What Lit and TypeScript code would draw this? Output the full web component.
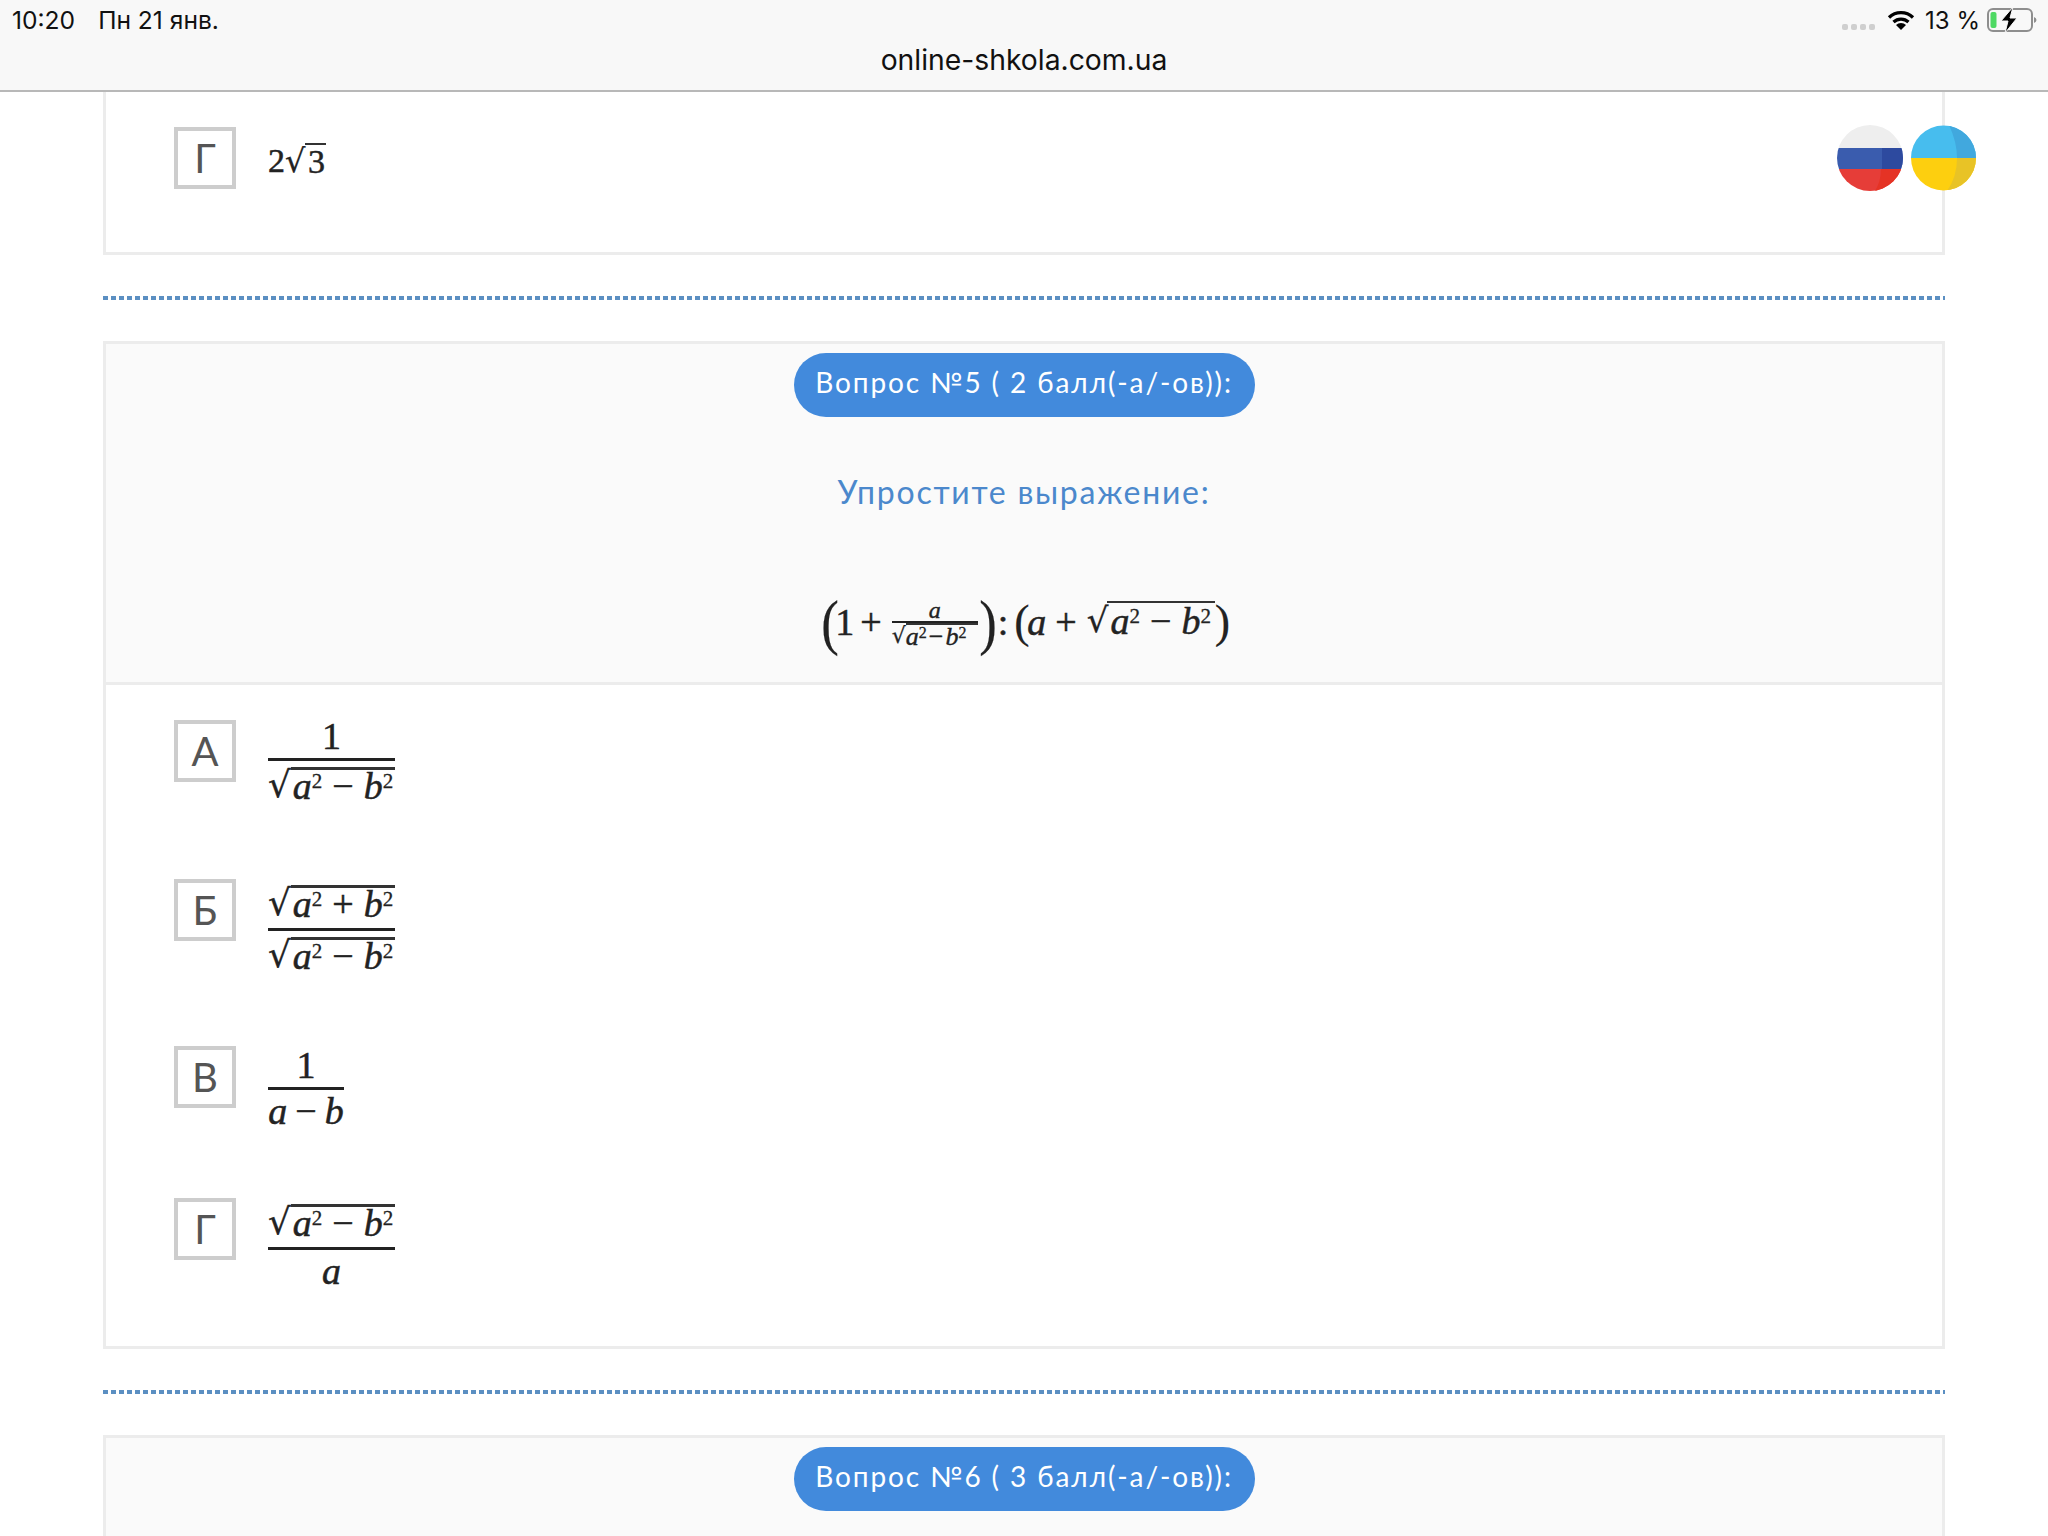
import { LitElement, html, css, svg } from "lit";
import { customElement } from "lit/decorators.js";

@customElement("app-root")
export class AppRoot extends LitElement {
  static styles = css`
    :host { display: block; height: 1536px; overflow: hidden; background: #fff; font-family: "Lato", "Open Sans", sans-serif; position: relative; }
    .status { height: 90px; background: #f8f8f8; border-bottom: 2px solid #b8b8b8; display: flex; flex-direction: column; font-family: "Inter", "Roboto", sans-serif; color: #111; }
    .status-top { height: 40px; display: flex; align-items: center; padding: 0 11px 0 12px; font-size: 24.6px; }
    .date { margin-left: 23px; }
    .spacer { flex: 1; }
    .dots { display: flex; gap: 3px; margin-right: 12px; margin-top: 13px; }
    .dots span { width: 6px; height: 6px; border-radius: 2px; background: #cfcfcf; }
    .pct { margin: 0 7px 0 10px; font-size: 24px; }
    .url { text-align: center; font-size: 28.3px; line-height: 40px; }
    main { padding: 0 103px; display: flex; flex-direction: column; }
    .card { border: 3px solid #ececec; background: #fff; }
    .card.first { border-top: 0; }
    .sep { height: 4px; margin: 41px 0; background: repeating-linear-gradient(90deg, #5b8fc2 0 5px, transparent 5px 8px); }
    .qhead { background: #fafafa; border-bottom: 3px solid #ececec; height: 341px; display: flex; flex-direction: column; align-items: center; padding-top: 9px; box-sizing: border-box; }
    .pill { width: 461px; height: 64px; padding-bottom: 6px; box-sizing: border-box; border-radius: 32px; background: #428adc; color: #fff; font-size: 28px; letter-spacing: 1.9px; display: flex; align-items: center; justify-content: center; white-space: nowrap; }
    .q { color: #4b88cc; font-size: 32px; letter-spacing: 1.75px; margin-top: 55px; line-height: 40px; white-space: nowrap; }
    .answers { padding: 35px 0 59px 68px; display: flex; flex-direction: column; gap: 80px; }
    .answers.one { padding: 35px 0 63px 68px; }
    .row { display: flex; gap: 32px; align-items: flex-start; }
    .box { width: 62px; height: 62px; box-sizing: border-box; border: 4px solid #cdcdcd; color: #555; font-size: 40px; font-weight: 400; display: flex; align-items: center; justify-content: center; flex: none; }
    .math { font-family: "Liberation Serif", "DejaVu Serif", serif; color: #222; font-size: 38px; line-height: 36px; -webkit-text-stroke: 0.5px #222; }
    .math i { font-style: italic; }
    .plain { margin-top: 16px; display: flex; align-items: flex-start; font-size: 34px; }
    .plain .rg { width: 20px; font-size: 32px; }
    .three { border-top: 2px solid #333; line-height: 33px; padding: 0 1px 0 3px; }
    .frac { display: flex; flex-direction: column; align-items: stretch; flex: none; }
    .w127 { width: 127px; }
    .w76 { width: 76px; }
    .w76 .op { margin: 0 8px; }
    .num, .den { display: flex; justify-content: center; white-space: nowrap; }
    .num.t { align-items: flex-end; padding-bottom: 4px; box-sizing: border-box; }
    .num.r { align-items: flex-start; padding-top: 6px; box-sizing: border-box; }
    .n38 { height: 38px; }
    .n41 { height: 41px; }
    .n49 { height: 49px; }
    .den { align-items: flex-start; }
    .d-gap { margin-top: 6px; }
    .d-low { margin-top: 3px; }
    .d28 { height: 25px; }
    .d30 { height: 29px; }
    .d33 { height: 32px; }
    .d37 { height: 34px; }
    .bar { height: 3px; background: #222; flex: none; }
    .sq { display: flex; align-items: flex-start; width: 100%; }
    .rg { font-family: "DejaVu Sans", sans-serif; font-size: 36px; line-height: 36px; width: 23px; flex: none; -webkit-text-stroke: 0.3px #222; }
    .rad { border-top: 3px solid #333; line-height: 33px; height: 33px; white-space: nowrap; flex: 1; text-align: center; }
    .math sup { font-size: 21px; line-height: 0; vertical-align: 11px; -webkit-text-stroke: 0.3px #222; }
    .op { margin: 0 10px; }
    .formula { margin-top: 80px; display: flex; align-items: center; height: 60px; }
    .lp { font-size: 62px; line-height: 60px; width: 15px; flex: none; transform: scaleX(.85); -webkit-text-stroke: 0.2px #222; }
    .lp2 { font-size: 46px; line-height: 60px; width: 13px; flex: none; -webkit-text-stroke: 0.2px #222; }
    .fplus { margin: 0 10px 0 6px; }
    .colon { margin: 0 6px 0 5px; }
    .aplus { margin: 0 10px 0 9px; }
    .ff { width: 86px; font-size: 25px; -webkit-text-stroke: 0.4px #222; }
    .ff .num { height: 26px; font-size: 24px; line-height: 22px; }
    .ff .num.t { padding-bottom: 0; }
    .ff .bar { height: 2px; }
    .ff .den { height: 26px; }
    .ff .rg { font-size: 22px; width: 14px; line-height: 26px; }
    .ff .rad { border-top: 2px solid #333; line-height: 23px; height: 23px; font-size: 26px; text-align: left; }
    .ff sup { font-size: 16px; vertical-align: 7px; }
    .ff .op { margin: 0 2px; }
    .fsq { width: 128px; flex: none; margin-bottom: 4px; }
    .fsq .rg { font-size: 34px; width: 20px; line-height: 38px; }
    .fsq .rad { border-top: 2px solid #333; line-height: 36px; height: 36px; }
    .flags { position: absolute; left: 1837px; top: 125px; display: block; }
  `;

  private a2(op: string) {
    return html`<i>a</i><sup>2</sup><span class="op">${op}</span><i>b</i><sup>2</sup>`;
  }
  private root(op: string) {
    return html`<div class="sq"><span class="rg">√</span><span class="rad">${this.a2(op)}</span></div>`;
  }
  private row(l: string, m: unknown) {
    return html`<div class="row"><div class="box">${l}</div>${m}</div>`;
  }
  private flags() {
    return html`<svg class="flags" width="142" height="68" viewBox="0 0 142 68">
      ${svg`<defs>
        <clipPath id="r"><circle cx="33" cy="33" r="33"/></clipPath>
        <clipPath id="u"><circle cx="106.500" cy="33" r="32.500"/></clipPath>
      </defs>
      <g clip-path="url(#r)">
        <rect width="66" height="23" fill="#eeeeee"/>
        <rect y="23" width="66" height="21" fill="#3a5cae"/>
        <rect y="44" width="66" height="22" fill="#e63d38"/>
        <rect x="45" y="23" width="21" height="21" fill="#2d4a9f"/>
        <path d="M44 44h22v22H38q6-10 6-22z" fill="#e53325"/>
      </g>
      <g clip-path="url(#u)">
        <rect x="73" width="68" height="33" fill="#47bdee"/>
        <rect x="73" y="33" width="68" height="33" fill="#fdcf0f"/>
        <path d="M112 0h30v33h-22q0-16-8-33z" fill="#41a8de"/>
        <path d="M120 33h22v33h-32q10-14 10-33z" fill="#e8c326"/>
      </g>`}
    </svg>`;
  }
  private wifi() {
    return html`<svg width="28" height="22" viewBox="0 0 28 22">
      <path d="M2 8.500a17 17 0 0 1 24 0M6.500 13a11 11 0 0 1 15 0" fill="none" stroke="#000" stroke-width="3.200"/>
      <path d="M14 21l-5-5a7 7 0 0 1 10 0z" fill="#000"/>
    </svg>`;
  }
  private battery() {
    return html`<svg width="50" height="26" viewBox="0 0 50 26">
      <rect x="1" y="2" width="44" height="22" rx="5" fill="none" stroke="#8e8e8e" stroke-width="2"/>
      <rect x="3.500" y="5" width="6" height="16" rx="2" fill="#4fd964"/>
      <path d="M47 10q2.500 1 2.500 3t-2.500 3z" fill="#8e8e8e"/>
      <path d="M26 0l-12 14h7l-3 12 12-15h-7z" fill="#000" stroke="#f8f8f8" stroke-width="1"/>
    </svg>`;
  }
  private head(n: number, pts: number, body: unknown) {
    return html`<div class="qhead">
      <div class="pill">Вопрос №${n} ( ${pts} балл(-а/-ов)):</div>
      ${body}
    </div>`;
  }

  render() {
    return html`
      <div class="status">
        <div class="status-top">
          <span>10:20</span><span class="date">Пн 21 янв.</span>
          <span class="spacer"></span>
          <span class="dots"><span></span><span></span><span></span><span></span></span>
          ${this.wifi()}<span class="pct">13 %</span>${this.battery()}
        </div>
        <div class="url">online-shkola.com.ua</div>
      </div>
      <main>
        <section class="card first">
          <div class="answers one">
            ${this.row("Г", html`<div class="math plain">2<span class="rg">√</span><span class="three">3</span></div>`)}
          </div>
        </section>
        <div class="sep"></div>
        <section class="card">
          ${this.head(5, 2, html`
            <div class="q">Упростите выражение:</div>
            <div class="math formula">
              <span class="lp">(</span><span>1</span><span class="fplus">+</span>
              <div class="frac ff">
                <div class="num t"><i>a</i></div>
                <div class="bar"></div>
                <div class="den">${this.root("−")}</div>
              </div>
              <span class="lp">)</span>
              <span class="colon">:</span>
              <span class="lp2">(</span><i>a</i><span class="aplus">+</span>
              <div class="sq fsq"><span class="rg">√</span><span class="rad">${this.a2("−")}</span></div>
              <span class="lp2">)</span>
            </div>
          `)}
          <div class="answers">
            ${this.row("А", html`<div class="math frac w127">
              <div class="num t n38">1</div><div class="bar"></div>
              <div class="den d-gap d33">${this.root("−")}</div></div>`)}
            ${this.row("Б", html`<div class="math frac w127">
              <div class="num r n49">${this.root("+")}</div><div class="bar"></div>
              <div class="den d-gap d30">${this.root("−")}</div></div>`)}
            ${this.row("В", html`<div class="math frac w76">
              <div class="num t n41">1</div><div class="bar"></div>
              <div class="den d-low d28"><span><i>a</i><span class="op">−</span><i>b</i></span></div></div>`)}
            ${this.row("Г", html`<div class="math frac w127">
              <div class="num r n49">${this.root("−")}</div><div class="bar"></div>
              <div class="den d-low d37"><i>a</i></div></div>`)}
          </div>
        </section>
        <div class="sep"></div>
        <section class="card">
          ${this.head(6, 3, "")}
        </section>
      </main>
      ${this.flags()}
    `;
  }
}
